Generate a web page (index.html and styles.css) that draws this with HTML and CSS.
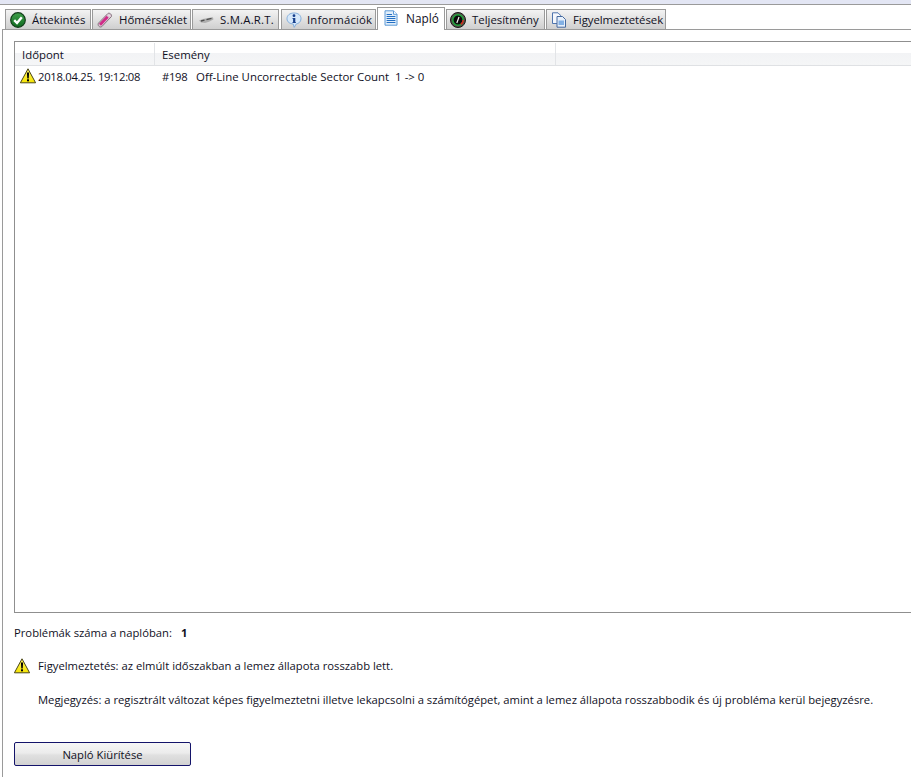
FILE: index.html
```html
<!DOCTYPE html>
<html lang="hu">
<head>
<meta charset="utf-8">
<title>Napló</title>
<link rel="stylesheet" href="styles.css">
</head>
<body>
<svg class="defs" width="0" height="0" aria-hidden="true">
  <defs>
    <linearGradient id="warnFill" x1="0" y1="0" x2="0" y2="1">
      <stop offset="0" stop-color="#fff36a"/>
      <stop offset="1" stop-color="#f5e400"/>
    </linearGradient>
    <linearGradient id="greenFill" x1="0" y1="0" x2="0" y2="1">
      <stop offset="0" stop-color="#3fa04a"/>
      <stop offset="1" stop-color="#0f6a20"/>
    </linearGradient>
    <symbol id="warn" viewBox="0 0 16 16">
      <path d="M8 .8 L15.6 14.8 H.4 Z" fill="url(#warnFill)" stroke="#4a4618" stroke-width="1" stroke-linejoin="round"/>
      <path d="M6.9 4.6 H9.1 L8.7 10.4 H7.3 Z" fill="#000"/>
      <rect x="7" y="11.3" width="2" height="2" fill="#000"/>
    </symbol>
  </defs>
</svg>
<div class="topstrip"></div>
<nav class="tabs">
  <div class="tab tab-a">
    <svg class="ico" viewBox="0 0 16 16"><circle cx="8" cy="8" r="7.3" fill="url(#greenFill)" stroke="#123c1a" stroke-width="1.2"/><path d="M4.2 8.2 L7 11 L11.8 5.2" fill="none" stroke="#fff" stroke-width="2.4"/></svg>
    <span>Áttekintés</span>
  </div>
  <div class="tab tab-b">
    <svg class="ico" viewBox="0 0 16 16"><path d="M1.4 11.2 L10.8 1.6 C12.4 .2 15.6 2.8 14.2 4.8 L4.8 14.6 C2.8 16 .2 13.4 1.4 11.2 Z" fill="#dcc3d3" stroke="#85747f"/><path d="M3 12.8 L10.6 4.8" stroke="#cf2c88" stroke-width="2.8"/><path d="M11.2 2.6 L13.2 4.6" stroke="#f4f4f4" stroke-width="1"/></svg>
    <span>Hőmérséklet</span>
  </div>
  <div class="tab tab-c">
    <svg class="ico" viewBox="0 0 16 16"><path d="M1 8.5 L5 7 L10 6 L15 5.2 L15.4 7.6 L11 9.8 L7 11 L3 10.5 Z" fill="#aeaeae"/><path d="M3 9 L6.5 8.2 M8.5 7.6 L13.5 6.4" stroke="#4f4f4f" stroke-width="1.3"/></svg>
    <span>S.M.A.R.T.</span>
  </div>
  <div class="tab tab-d">
    <svg class="ico" viewBox="0 0 16 16"><path d="M8 1 C12.4 1 15 3.4 15 6.8 C15 10 12.4 11.6 10.2 12 L8.2 15.4 L7.2 12 C4 11.8 1 10 1 6.8 C1 3.4 3.6 1 8 1 Z" fill="#d6e8fa" stroke="#84aedb"/><circle cx="8" cy="3.7" r="1.4" fill="#173f8c"/><path d="M6.4 5.9 H9.3 V10.2 H10 V11 H6.4 V10.2 H7.1 V6.7 H6.4 Z" fill="#173f8c"/></svg>
    <span>Információk</span>
  </div>
  <div class="tab tab-e tab-active">
    <svg class="ico" viewBox="0 0 16 16"><path d="M2 .8 H10.5 L14 4.3 V15.2 H2 Z" fill="#e2effb" stroke="#5e9ad6"/><path d="M10.5 .8 V4.3 H14" fill="#fff" stroke="#5e9ad6"/><path d="M3.6 4.5 H9 M3.6 6.5 H12.4 M3.6 8.5 H12.4 M3.6 10.5 H12.4 M3.6 12.5 H12.4" stroke="#2470c4" stroke-width="1.1"/></svg>
    <span>Napló</span>
  </div>
  <div class="tab tab-f">
    <svg class="ico" viewBox="0 0 16 16"><circle cx="8" cy="8" r="7.5" fill="#54544a" stroke="#1a1a18"/><circle cx="8" cy="8" r="5.2" fill="#0a0a0a" stroke="#1fa83c" stroke-width="1.5"/><path d="M10.8 12.3 A5.2 5.2 0 0 0 13.2 8" fill="none" stroke="#e02020" stroke-width="1.5"/><path d="M6.8 11 L9 5" stroke="#f0f0f0" stroke-width="1.2"/></svg>
    <span>Teljesítmény</span>
  </div>
  <div class="tab tab-g">
    <svg class="ico" viewBox="0 0 16 16"><path d="M1.5 .8 H7 L9.5 3.3 V11.5 H1.5 Z" fill="#f4f7fc" stroke="#4f74ad"/><path d="M6 4.5 H11.5 L14.5 7.5 V15.2 H6 Z" fill="#e6effa" stroke="#44699f"/><rect x="7.5" y="8.5" width="5.5" height="4.5" fill="#82b0e4"/></svg>
    <span>Figyelmeztetések</span>
  </div>
</nav>
<main class="panel">
  <section class="list">
    <div class="list-head">
      <div class="col col-time">Időpont</div>
      <div class="col col-event">Esemény</div>
      <div class="col col-rest"></div>
    </div>
    <div class="list-row">
      <svg class="warn-sm"><use href="#warn"/></svg>
      <span class="cell-time">2018.04.25. 19:12:08</span>
      <span class="cell-id">#198</span>
      <span class="cell-msg">Off-Line Uncorrectable Sector Count&nbsp; 1 -&gt; 0</span>
    </div>
  </section>
  <p class="count">Problémák száma a naplóban:<b>1</b></p>
  <div class="warning">
    <svg class="warn-lg"><use href="#warn"/></svg>
    <span>Figyelmeztetés: az elmúlt időszakban a lemez állapota rosszabb lett.</span>
  </div>
  <p class="note">Megjegyzés: a regisztrált változat képes figyelmeztetni illetve lekapcsolni a számítógépet, amint a lemez állapota rosszabbodik és új probléma kerül bejegyzésre.</p>
  <button class="clear" type="button">Napló Kiürítése</button>
</main>
</body>
</html>
```
FILE: styles.css
```css
html, body {
  margin: 0;
  padding: 0;
  height: 778px;
  overflow: hidden;
  background: #fff;
  color: #10101e;
  font-family: "Open Sans", "Noto Sans", sans-serif;
  font-size: 11.4px;
}
.defs { display: block; height: 0; }
.topstrip {
  height: 4px;
  background: #e3e6f4;
  border-bottom: 1px solid #9a9a9a;
}
.tabs {
  display: flex;
  align-items: flex-end;
  height: 24px;
  padding-left: 5px;
  box-sizing: border-box;
  position: relative;
  z-index: 1;
}
.tab {
  display: flex;
  align-items: center;
  gap: 6px;
  height: 20px;
  box-sizing: border-box;
  padding-left: 4px;
  margin-right: 1px;
  background: linear-gradient(#f3f3f3, #cfcfcf);
  border: 1px solid #9a9a9a;
  border-bottom: 0;
  white-space: nowrap;
}
.ico { width: 16px; height: 16px; flex: none; }
.tab-a { width: 86px; gap: 6px; }
.tab-b { width: 99px; gap: 6px; }
.tab-c { width: 87px; gap: 6px; padding-left: 5px; letter-spacing: .2px; margin-right: 2px; }
.tab-d { width: 95px; gap: 5px; letter-spacing: .15px; }
.tab-e { width: 68px; gap: 7px; padding-left: 5px; }
.tab-f { width: 99px; padding-left: 3px; }
.tab-g { width: 120px; letter-spacing: -.05px; }
.tab-active {
  height: 23px;
  margin-bottom: -1px;
  padding-bottom: 2px;
  background: #fff;
  font-size: 11.8px;
}
.panel {
  margin-left: 2px;
  border-left: 1px solid #9a9a9a;
  border-top: 1px solid #9a9a9a;
  padding: 11px 0 0 11px;
  height: 748px;
  box-sizing: border-box;
  font-size: 11.25px;
}
.list {
  height: 572px;
  box-sizing: border-box;
  border: 1px solid #8f8f8f;
  border-right: 0;
  padding-top: 1px;
}
.list-head {
  display: flex;
  height: 23px;
  box-sizing: border-box;
  background: linear-gradient(#fff 0, #fff 45%, #f2f3f5 46%, #f5f6f7 100%);
  border-bottom: 1px solid #dfe1e4;
  font-size: 11.4px;
}
.col {
  display: flex;
  align-items: center;
  box-sizing: border-box;
  padding-left: 7px;
  border-right: 1px solid #e2e4e7;
}
.col-time { width: 140px; }
.col-event { width: 401px; }
.col-rest { flex: 1; border-right: 0; }
.list-row {
  display: flex;
  align-items: center;
  height: 20px;
  padding-left: 5px;
  white-space: nowrap;
}
.warn-sm { width: 16px; height: 16px; flex: none; }
.cell-time { width: 124px; margin-left: 2px; letter-spacing: -.28px; }
.cell-id { width: 34px; letter-spacing: -.3px; }
.cell-msg { font-size: 11.45px; }
.count {
  margin: 12px 0 0;
  height: 16px;
  line-height: 16px;
}
.count b { margin-left: 9px; }
.warning {
  display: flex;
  align-items: center;
  gap: 8px;
  margin-top: 16px;
  height: 17px;
}
.warn-lg { width: 16px; height: 16px; flex: none; }
.note {
  margin: 18px 0 0 24px;
  height: 16px;
  line-height: 16px;
  white-space: nowrap;
}
.clear {
  display: block;
  margin-top: 34px;
  width: 177px;
  height: 24px;
  padding: 0;
  border: 1px solid #14146a;
  border-radius: 2px;
  background: linear-gradient(#f6f6f6, #ececec 45%, #e0e0e0 55%, #d2d2d2);
  color: #10101e;
  font: inherit;
}
```
